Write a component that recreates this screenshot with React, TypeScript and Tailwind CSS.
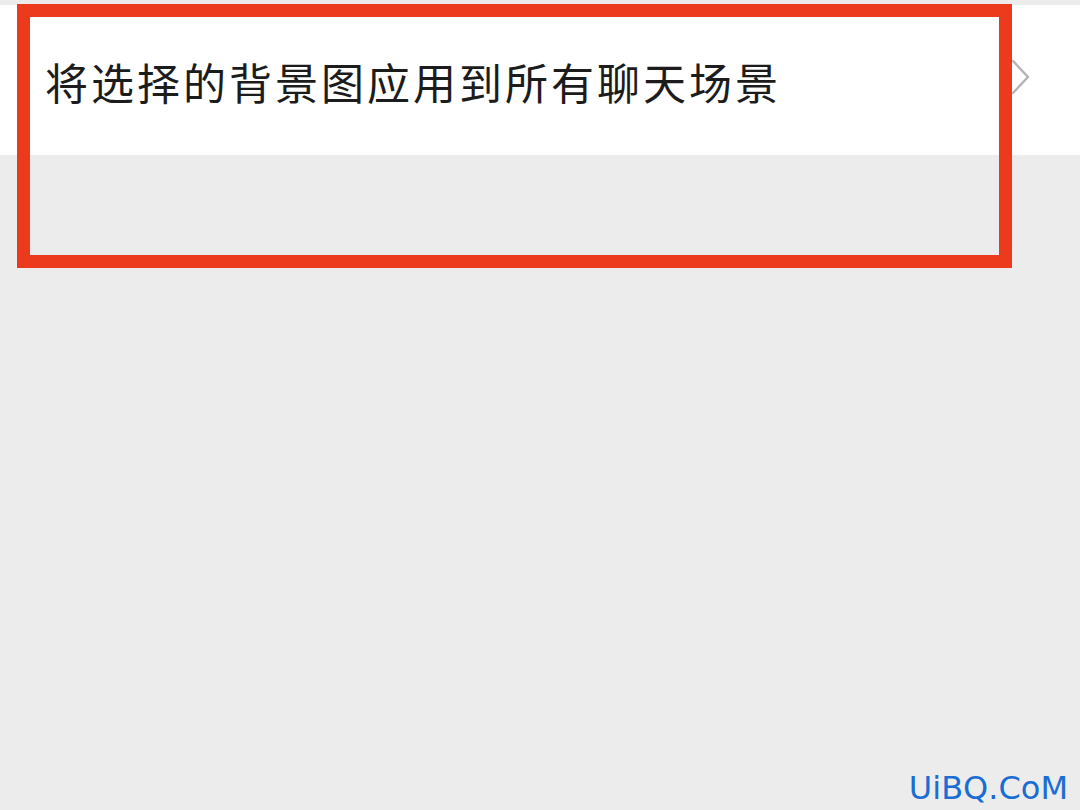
export default function App() {
  return (
    <div className="relative w-[1080px] h-[810px] overflow-hidden bg-[#ececec] font-['Noto_Sans_CJK_SC','Noto_Sans',sans-serif]">
      {/* Setting row */}
      <div className="mt-[5px] h-[150px] bg-white flex items-center justify-between pl-[45px] pr-[49px] pt-[2px]">
        <span className="text-[43px] leading-none text-[#1c1c1c] tracking-[3px]">
          将选择的背景图应用到所有聊天场景
        </span>
        <svg width="20" height="36" viewBox="0 0 20 36" fill="none" className="mb-[8px]">
          <path d="M2 2 L17 18 L2 34" stroke="#b4b4b4" strokeWidth="2.4" strokeLinecap="round" strokeLinejoin="round" />
        </svg>
      </div>

      {/* Annotation box */}
      <div className="absolute left-[17px] top-[4px] w-[995px] h-[264px] border-[13px] border-[#ec3a1c]" />

      {/* Watermark */}
      <div className="absolute right-[12px] bottom-[6px] text-[32px] leading-none text-[#1a6dd2] font-['DejaVu_Sans',sans-serif]">
        UiBQ.CoM
      </div>
    </div>
  );
}
